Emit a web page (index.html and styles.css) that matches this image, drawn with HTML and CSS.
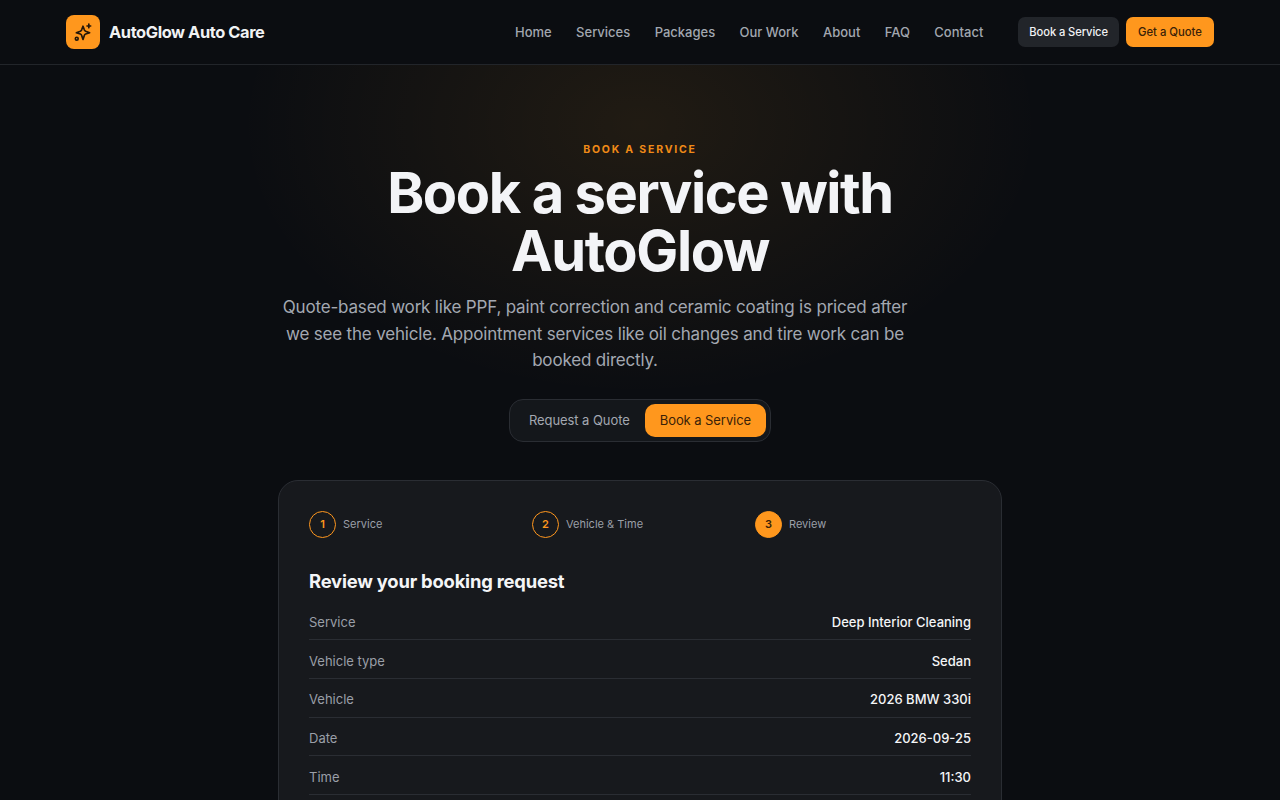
FILE: index.html
```html
<!DOCTYPE html>
<html lang="en">
<head>
<meta charset="utf-8">
<title>Book a Service | AutoGlow Auto Care</title>
<link rel="stylesheet" href="styles.css">
</head>
<body>
<header class="site-header">
  <div class="header-inner">
    <a class="brand" href="#">
      <span class="brand-mark">
        <svg width="20" height="20" viewBox="0 0 24 24" fill="none" stroke="currentColor" stroke-width="2" stroke-linecap="round" stroke-linejoin="round">
          <path d="M12 5l1.600 4.400a3 3 0 0 0 1.600 1.600L20 12.800l-4.800 1.700a3 3 0 0 0-1.600 1.600L12 21l-1.600-4.900a3 3 0 0 0-1.600-1.600L4 12.800 8.800 11a3 3 0 0 0 1.600-1.600z"/>
          <path d="M19 2.500v4.500M16.800 4.800h4.400"/>
          <circle cx="4.500" cy="20" r="1.700"/>
        </svg>
      </span>
      <span class="brand-name">AutoGlow Auto Care</span>
    </a>
    <nav class="main-nav">
      <a href="#">Home</a>
      <a href="#">Services</a>
      <a href="#">Packages</a>
      <a href="#">Our Work</a>
      <a href="#">About</a>
      <a href="#">FAQ</a>
      <a href="#">Contact</a>
    </nav>
    <div class="header-actions">
      <a class="btn btn-dark" href="#">Book a Service</a>
      <a class="btn btn-orange" href="#">Get a Quote</a>
    </div>
  </div>
</header>
<main class="hero">
  <p class="eyebrow">BOOK A SERVICE</p>
  <h1>Book a service with AutoGlow</h1>
  <p class="lead">Quote-based work like PPF, paint correction and ceramic coating is priced after we see the vehicle. Appointment services like oil changes and tire work can be booked directly.</p>
  <div class="switch">
    <a class="switch-item" href="#">Request a Quote</a>
    <a class="switch-item active" href="#">Book a Service</a>
  </div>
  <section class="card">
    <ol class="steps">
      <li class="step"><span class="dot">1</span><span class="step-label">Service</span></li>
      <li class="step"><span class="dot">2</span><span class="step-label">Vehicle &amp; Time</span></li>
      <li class="step"><span class="dot current">3</span><span class="step-label">Review</span></li>
    </ol>
    <h2>Review your booking request</h2>
    <dl class="summary">
      <div class="row"><dt>Service</dt><dd>Deep Interior Cleaning</dd></div>
      <div class="row"><dt>Vehicle type</dt><dd>Sedan</dd></div>
      <div class="row"><dt>Vehicle</dt><dd>2026 BMW 330i</dd></div>
      <div class="row"><dt>Date</dt><dd>2026-09-25</dd></div>
      <div class="row"><dt>Time</dt><dd>11:30</dd></div>
    </dl>
  </section>
</main>
</body>
</html>
```
FILE: styles.css
```css
* { box-sizing: border-box; }
html, body { margin: 0; padding: 0; }
body {
  background: #0b0d11;
  color: #f4f5f7;
  font-family: "Inter", "Liberation Sans", sans-serif;
  overflow-x: hidden;
}
a { text-decoration: none; color: inherit; }
.site-header {
  height: 65px;
  background: #0b0d11;
  border-bottom: 1px solid #22252a;
}
.header-inner {
  height: 64px;
  padding: 0 66px;
  display: flex;
  align-items: center;
}
.brand { display: flex; align-items: center; gap: 9px; }
.brand-mark {
  width: 34px;
  height: 34px;
  border-radius: 8px;
  background: #ff971d;
  color: #24170a;
  display: flex;
  align-items: center;
  justify-content: center;
}
.brand-name {
  font-size: 16.4px;
  font-weight: 700;
  letter-spacing: -0.4px;
  color: #f1f2f4;
}
.main-nav {
  margin-left: auto;
  display: flex;
  gap: 24.4px;
  font-size: 13px;
  font-weight: 500;
  color: #a2a7b0;
}
.header-actions { margin-left: 35px; display: flex; gap: 7px; }
.btn {
  height: 30px;
  border-radius: 7px;
  font-weight: 500;
  display: flex;
  align-items: center;
}
.btn-dark {
  padding: 0 11px;
  font-size: 11.2px;
  letter-spacing: -0.1px;
  background: #22252a;
  color: #f1f2f4;
}
.btn-orange {
  padding: 0 12px;
  font-size: 11.3px;
  background: #ff971d;
  color: #3a2208;
}
.hero {
  display: flex;
  flex-direction: column;
  align-items: center;
  padding-top: 78px;
  background: radial-gradient(ellipse 400px 270px at 50% 60px, rgba(255,170,40,.09), rgba(255,170,40,0) 100%);
}
.eyebrow {
  margin: 0;
  font-size: 10.5px;
  line-height: 13px;
  font-weight: 700;
  letter-spacing: 1.8px;
  color: #f08a17;
}
h1 {
  margin: 8px 0 0;
  width: 640px;
  text-align: center;
  font-size: 56px;
  line-height: 58px;
  font-weight: 700;
  letter-spacing: -1.4px;
  color: #f3f4f7;
}
.lead {
  margin: 14px 90px 0 0;
  width: 640px;
  text-align: center;
  font-size: 17px;
  line-height: 26.5px;
  letter-spacing: -0.18px;
  color: #a3a8b1;
}
.switch {
  margin-top: 25px;
  height: 43px;
  padding: 4px;
  display: flex;
  border: 1px solid #2a2d33;
  border-radius: 14px;
  background: #14171b;
}
.switch-item {
  padding: 0 15px;
  border-radius: 10px;
  font-size: 13px;
  letter-spacing: -0.07px;
  display: flex;
  align-items: center;
  color: #a3a8b1;
}
.switch-item.active { background: #ff971d; color: #3a2208; }
.card {
  margin-top: 38px;
  width: 724px;
  padding: 30px;
  background: #17191d;
  border: 1px solid #2a2d33;
  border-radius: 20px;
}
.steps {
  list-style: none;
  margin: 0;
  padding: 0;
  display: grid;
  grid-template-columns: repeat(3, 1fr);
  gap: 7px;
}
.step { display: flex; align-items: center; gap: 7px; }
.dot {
  width: 27px;
  height: 27px;
  border: 1px solid #ff971d;
  border-radius: 50%;
  color: #ff971d;
  font-size: 11px;
  font-weight: 600;
  display: flex;
  align-items: center;
  justify-content: center;
}
.dot.current { background: #ff971d; color: #3a2208; }
.step-label { font-size: 11px; color: #9a9fa8; }
h2 {
  margin: 31px 0 0;
  font-size: 18.4px;
  line-height: 24px;
  font-weight: 700;
  letter-spacing: -0.2px;
  color: #f4f5f7;
}
.summary { margin: 9px 0 0; }
.row {
  height: 38.7px;
  padding-top: 3px;
  display: flex;
  align-items: center;
  justify-content: space-between;
  border-bottom: 1px solid #2a2d33;
  font-size: 13px;
}
.row dt { color: #9a9fa8; }
.row dd { margin: 0; font-weight: 500; color: #f4f5f7; }
```
